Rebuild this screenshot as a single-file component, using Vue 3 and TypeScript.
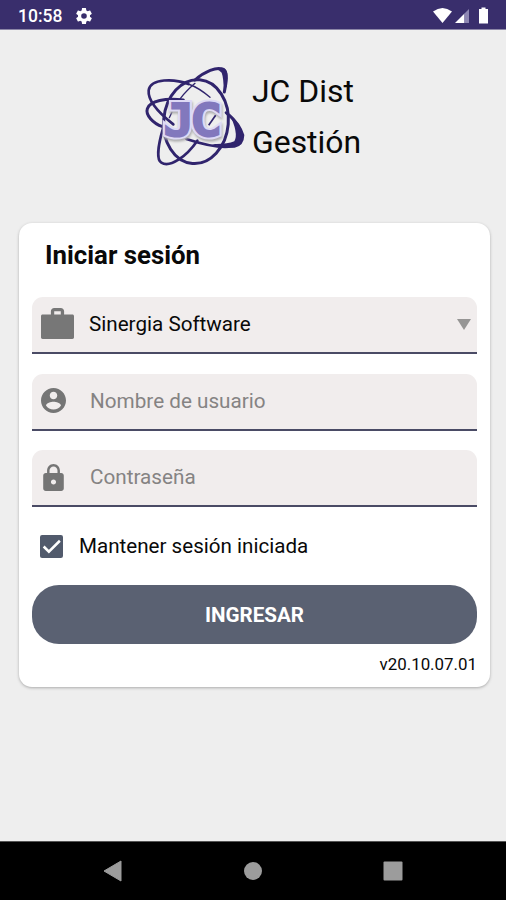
<script setup lang="ts">
import { ref } from 'vue'

const company = ref('Sinergia Software')
const username = ref('')
const password = ref('')
const remember = ref(true)
</script>

<template>
  <div class="screen">
    <header class="status">
      <span class="clock">10:58</span>
      <svg class="gear" viewBox="2 2 20 20"><path fill="#fff" d="M19.43 12.98c.04-.32.07-.64.07-.98s-.03-.66-.07-.98l2.11-1.65c.19-.15.24-.42.12-.64l-2-3.46c-.12-.22-.39-.3-.61-.22l-2.49 1c-.52-.4-1.08-.73-1.69-.98l-.38-2.65A.49.49 0 0 0 14 2h-4c-.25 0-.46.18-.49.42l-.38 2.65c-.61.25-1.17.59-1.69.98l-2.49-1c-.23-.09-.49 0-.61.22l-2 3.46c-.13.22-.07.49.12.64l2.11 1.65c-.04.32-.07.65-.07.98s.03.66.07.98l-2.11 1.65c-.19.15-.24.42-.12.64l2 3.46c.12.22.39.3.61.22l2.49-1c.52.4 1.08.73 1.69.98l.38 2.65c.03.24.24.42.49.42h4c.25 0 .46-.18.49-.42l.38-2.65c.61-.25 1.17-.59 1.69-.98l2.49 1c.23.09.49 0 .61-.22l2-3.46c.12-.22.07-.49-.12-.64l-2.11-1.65zM12 15.5a3.5 3.5 0 1 1 0-7 3.5 3.5 0 0 1 0 7z" /></svg>
      <svg class="signals" viewBox="0 0 60 20">
        <path fill="#fff" d="M1 5.5Q10.500-1.500 20 5.500L10.500 17Z" />
        <path fill="#fff" d="M23 17L32.500 7.500V17Z" />
        <path fill="#8e87b3" d="M32.500 7.500L37 3V17H32.500Z" />
        <path fill="#fff" d="M49.500 1.500h4V3H56V17.500h-9V3h2.500Z" />
      </svg>
    </header>

    <main>
      <div class="brand">
        <svg class="logo" viewBox="0 0 360 360">
          <g fill="none" stroke="#30246d" stroke-linecap="round">
            <ellipse cx="180" cy="197" rx="97" ry="126" stroke-width="9" transform="rotate(5 180 197)" />
            <path stroke-width="8" d="M112 205C70 172 35 133 38 103C43 66 116 68 157 84" />
            <path stroke-width="4" d="M157 84Q190 96 222 124" />
            <path stroke-width="9" d="M80 212C50 202 28 176 34 158C43 134 88 126 142 132" />
            <path stroke-width="4" d="M100 185C123 134 145 110 177 82" />
            <path stroke-width="9" d="M177 72C203 48 244 29 263 41C276 52 271 78 265 108" />
            <path stroke-width="8" d="M82 214C69 257 59 310 76 320C102 336 151 302 184 254" />
            <path stroke-width="8" d="M151 249C200 265 269 284 304 266C333 248 311 203 270 170" />
          </g>
          <path fill="#30246d" d="M238 39Q269 25 274 52L272 92L263 105Q263 66 257 50Q251 43 238 39Z" />
          <path fill="#30246d" d="M279 171Q315 202 325 237Q324 270 296 275Q254 276 228 264Q271 266 295 256Q309 232 279 171Z" />
          <g class="monogram edge">
            <text transform="translate(130 236) scale(1.15 1)">J</text>
            <text transform="translate(211 236) scale(1.15 1)">C</text>
          </g>
          <g class="monogram face">
            <text transform="translate(130 236) scale(1.15 1)">J</text>
            <text transform="translate(211 236) scale(1.15 1)">C</text>
          </g>
          <path fill="none" stroke="#30246d" stroke-width="5" d="M218 208L239 178" />
        </svg>
        <h1>JC Dist<br>Gestión</h1>
      </div>

      <form class="card" @submit.prevent>
        <h2>Iniciar sesión</h2>
        <div class="field">
          <svg class="briefcase" viewBox="2 2 20 19" preserveAspectRatio="none"><path fill="#777" d="M20 6h-4V4c0-1.110-.89-2-2-2h-4c-1.110 0-2 .89-2 2v2H3c-.6 0-1 .4-1 1v13c0 .6.4 1 1 1h18c.6 0 1-.4 1-1V7c0-.6-.4-1-1-1zm-6 0h-4V4h4v2z" /></svg>
          <span class="company">{{ company }}</span>
          <svg class="arrow" viewBox="0 0 14 11"><path fill="#969594" d="M0 0H14L7 11Z" /></svg>
        </div>
        <label class="field">
          <svg class="user" viewBox="2 2 20 20"><path fill="#757575" d="M12 2C6.480 2 2 6.480 2 12s4.480 10 10 10 10-4.480 10-10S17.520 2 12 2zm0 3c1.660 0 3 1.340 3 3s-1.340 3-3 3-3-1.340-3-3 1.340-3 3-3zm0 14.200c-2.500 0-4.710-1.280-6-3.220.03-1.990 4-3.080 6-3.080 1.990 0 5.970 1.090 6 3.080-1.290 1.940-3.500 3.220-6 3.220z" /></svg>
          <input v-model="username" type="text" placeholder="Nombre de usuario">
        </label>
        <label class="field">
          <svg class="lock" viewBox="4 1 16 21"><path fill="#757575" d="M18 8h-1V6c0-2.760-2.240-5-5-5S7 3.240 7 6v2H6c-1.100 0-2 .9-2 2v10c0 1.100.9 2 2 2h12c1.100 0 2-.9 2-2V10c0-1.100-.9-2-2-2zm-6 9c-1.100 0-2-.9-2-2s.9-2 2-2 2 .9 2 2-.9 2-2 2zm3.100-9H8.900V6c0-1.710 1.390-3.100 3.100-3.100s3.100 1.390 3.100 3.100v2z" /></svg>
          <input v-model="password" type="password" placeholder="Contraseña">
        </label>
        <div class="remember" @click="remember = !remember">
          <svg class="check" viewBox="0 0 22 22">
            <rect width="22" height="22" rx="2" fill="#515a6c" />
            <path v-if="remember" d="M3.500 11L8.500 16L19 5.500" fill="none" stroke="#fff" stroke-width="2.400" />
          </svg>
          <span>Mantener sesión iniciada</span>
        </div>
        <button type="submit">INGRESAR</button>
        <p class="version">v20.10.07.01</p>
      </form>
    </main>

    <nav class="navbar">
      <svg viewBox="0 0 20 22"><path fill="#9c9c9c" d="M18 1V21L1 11Z" stroke="#9c9c9c" stroke-linejoin="round" /></svg>
      <svg viewBox="0 0 20 22"><circle cx="10" cy="11" r="9" fill="#9c9c9c" /></svg>
      <svg viewBox="0 0 20 22"><rect x=".5" y="1.500" width="19" height="19" rx="1" fill="#9c9c9c" /></svg>
    </nav>
  </div>
</template>

<style>
body { margin: 0; }
</style>

<style scoped>
* { box-sizing: border-box; }
.screen { width: 506px; height: 900px; display: flex; flex-direction: column; background: #eee; font-family: Roboto, sans-serif; color: #090909; overflow: hidden; }
.status { height: 30px; flex: none; background: #392e6c; border-bottom: 1px solid #8c86a7; color: #fff; display: flex; align-items: center; padding: 2px 14px 0 18px; }
.clock { font-size: 17.500px; font-weight: 500; width: 58px; }
.gear { width: 16px; height: 16px; }
.signals { width: 60px; height: 20px; margin-left: auto; }
main { flex: 1; min-height: 0; padding: 26px 16px 0 19px; }
.brand { height: 167px; padding-left: 117px; display: flex; align-items: flex-start; }
.logo { width: 120px; height: 120px; flex: none; }
.monogram { font: 126px "DejaVu Sans Mono", monospace; text-anchor: middle; stroke-linejoin: miter; }
.edge { fill: #dedaf5; stroke: #dedaf5; stroke-width: 24px; filter: drop-shadow(2px 6px 3px #aaa); }
.face { fill: #8278bd; stroke: #8278bd; stroke-width: 12px; }
h1 { margin: 10px 0 0 -4px; font-size: 31.900px; line-height: 51px; font-weight: 400; white-space: nowrap; }
.card { width: 471px; height: 464px; background: #fff; border-radius: 13px; box-shadow: 0 1px 3px #aaa; padding: 0 13px; display: flex; flex-direction: column; }
h2 { margin: 0; height: 74px; padding: 17px 0 0 13px; font-size: 25.800px; line-height: 30px; font-weight: 700; }
.field { height: 57px; flex: none; display: flex; align-items: center; background: #f1eded; border-radius: 11px 11px 0 0; border-bottom: 2px solid #4a4b65; margin-bottom: 19.500px; padding: 0 6px 0 9px; }
label.field { padding-bottom: 1px; }
.field + .field + .field { margin-bottom: 0; }
.briefcase { width: 33px; height: 31px; margin-bottom: 2px; }
.company { margin-left: 15px; font-size: 20.650px; flex: 1; padding-bottom: 1px; }
.arrow { width: 14px; height: 11px; margin-bottom: 1px; }
.user { width: 25px; height: 25px; }
.lock { width: 21px; height: 27px; margin: 0 2px; }
input { border: 0; outline: 0; padding: 0; margin-left: 24px; flex: 1; min-width: 0; background: transparent; font: 20.700px Roboto, sans-serif; color: #111; }
input::placeholder { color: #858383; opacity: 1; }
.remember { height: 78px; display: flex; align-items: center; padding-left: 8px; font-size: 20.600px; }
.check { width: 23px; height: 23px; margin-right: 16px; }
button { height: 59px; flex: none; border: 0; border-radius: 27px; background: #5a6172; color: #fff; font: 700 20.600px Roboto, sans-serif; }
.version { margin: 10px 0 0; font-size: 16.900px; line-height: 20px; text-align: right; }
.navbar { height: 59px; flex: none; background: #000; border-top: 1px solid #555; display: flex; justify-content: space-between; align-items: center; padding: 0 103px; }
.navbar svg { width: 20px; height: 22px; }
</style>
